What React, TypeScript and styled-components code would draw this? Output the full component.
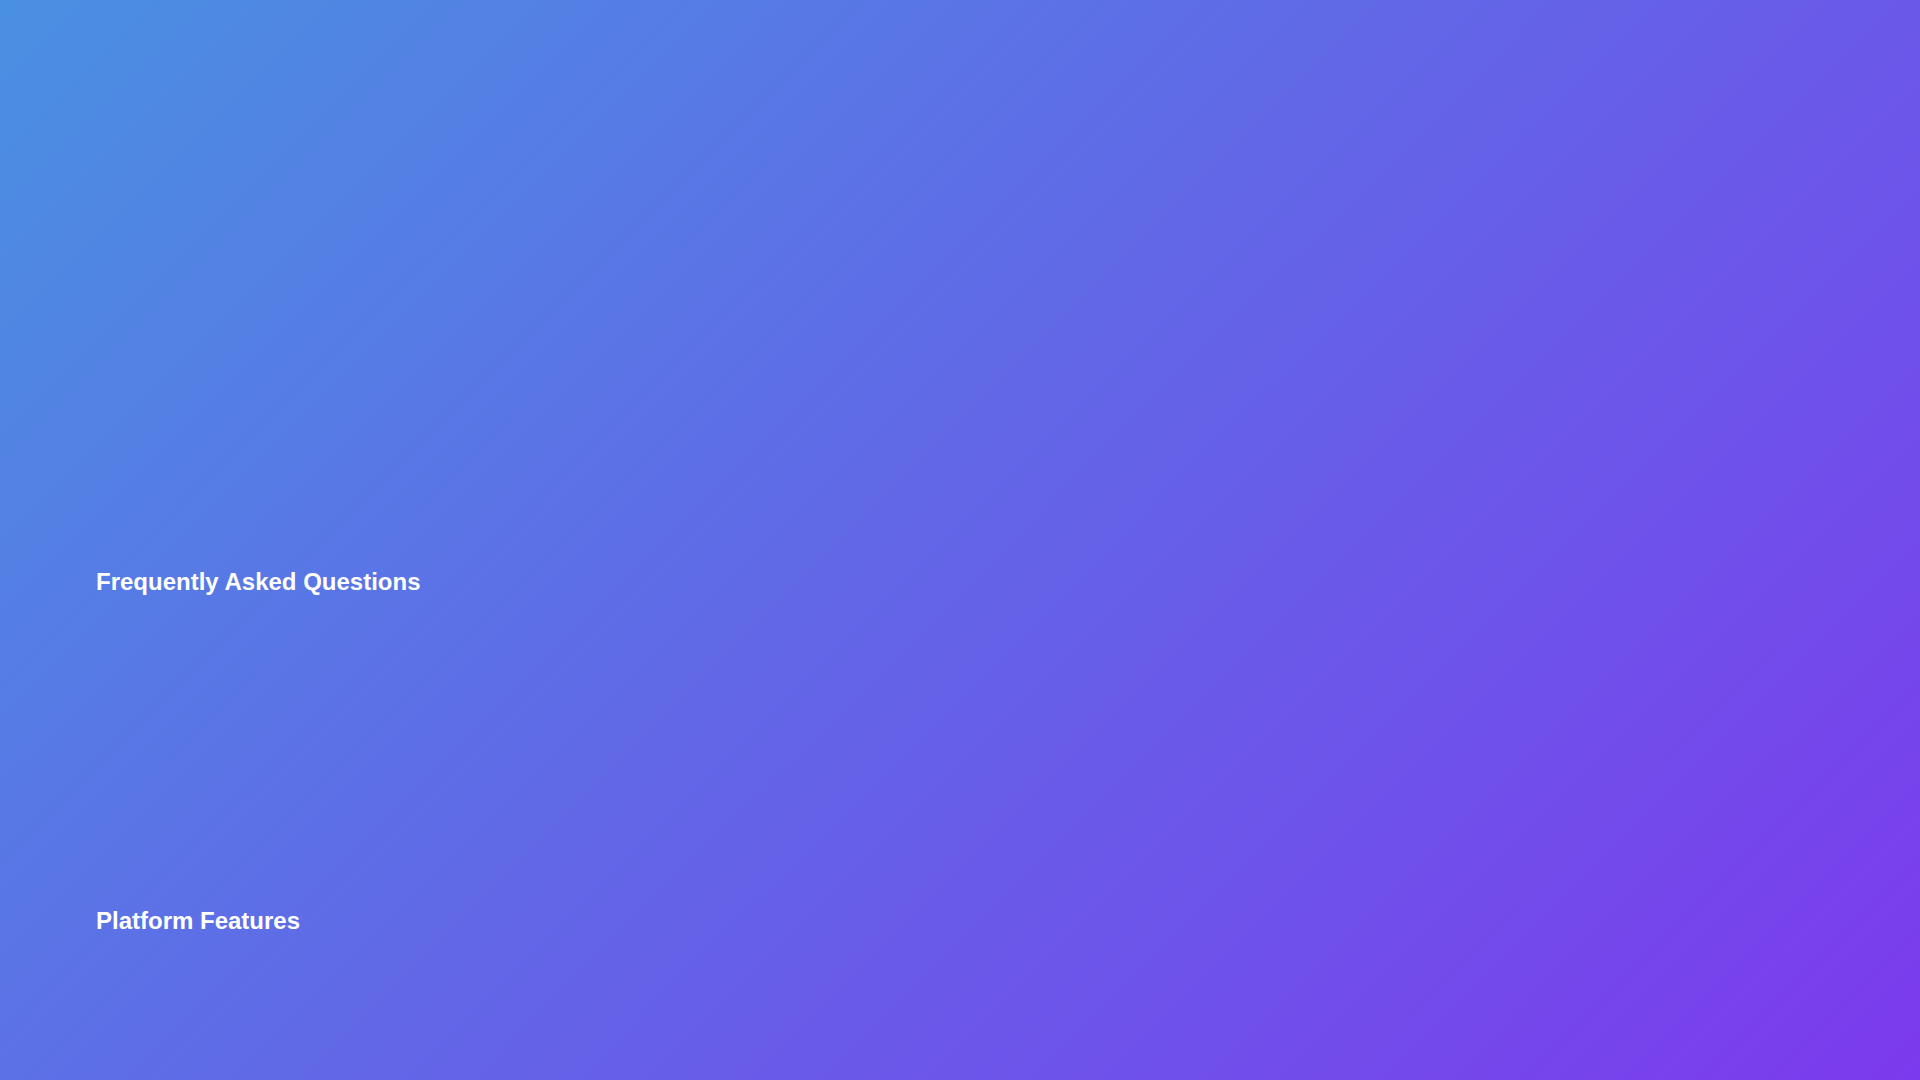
import React from "react";
import styled, { createGlobalStyle } from "styled-components";

const GlobalStyle = createGlobalStyle`
  html, body {
    margin: 0;
    padding: 0;
    height: 100%;
    overflow: hidden;
  }
  body {
    font-family: "Liberation Sans", Arial, sans-serif;
    color: #fff;
  }
`;

const Viewport = styled.div`
  height: 100vh;
  overflow-y: auto;
  background: linear-gradient(135deg, #4a90e2 0%, #7c3aed 100%);

  &::-webkit-scrollbar {
    width: 10px;
  }
  &::-webkit-scrollbar-track {
    background: #fff;
  }
  &::-webkit-scrollbar-thumb {
    background: #111;
    border: 2px solid #fff;
    border-radius: 6px;
  }
`;

const Page = styled.main`
  padding: 0 5%;
`;

const Hero = styled.header`
  min-height: 520px;
`;

const Section = styled.section`
  padding: 48px 0;
`;

const Title = styled.h2`
  font-size: 24px;
  font-weight: 700;
  line-height: 28px;
  margin: 0 0 24px;
`;

const Body = styled.div<{ $height: number }>`
  min-height: ${(p) => p.$height}px;
`;

const App = () => {
  return (
    <>
      <GlobalStyle />
      <Viewport>
        <Page>
          <Hero />
          <Section>
            <Title>Frequently Asked Questions</Title>
            <Body $height={191} />
          </Section>
          <Section>
            <Title>Platform Features</Title>
            <Body $height={1190} />
          </Section>
        </Page>
      </Viewport>
    </>
  );
};

export default App;
